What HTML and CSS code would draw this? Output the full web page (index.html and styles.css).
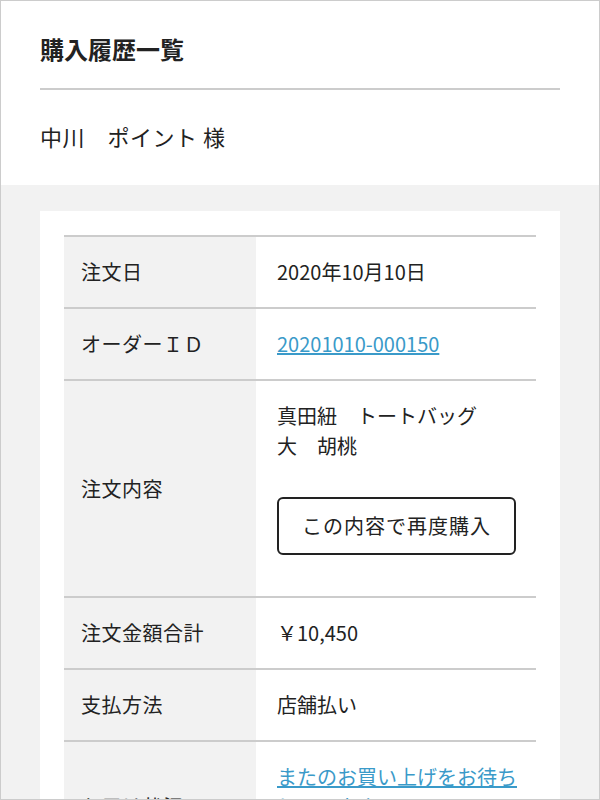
FILE: index.html
```html
<!DOCTYPE html>
<html lang="ja">
<head>
    <meta charset="UTF-8">
    <meta name="viewport" content="width=device-width, initial-scale=1.0">
    <title>購入履歴一覧</title>
    <link rel="stylesheet" href="styles.css">
</head>
<body>
    <div class="page">
        <div class="header">
            <h1 class="title">購入履歴一覧</h1>
            <p class="customer">中川　ポイント 様</p>
        </div>

        <div class="history">
            <div class="card">
                <table class="order">
                    <tr>
                        <th>注文日</th>
                        <td>2020年10月10日</td>
                    </tr>
                    <tr>
                        <th>オーダーＩＤ</th>
                        <td><a href="#">20201010-000150</a></td>
                    </tr>
                    <tr>
                        <th>注文内容</th>
                        <td>
                            真田紐　トートバッグ<br>大　胡桃
                            <button class="rebuy">この内容で再度購入</button>
                        </td>
                    </tr>
                    <tr>
                        <th>注文金額合計</th>
                        <td>￥10,450</td>
                    </tr>
                    <tr>
                        <th>支払方法</th>
                        <td>店舗払い</td>
                    </tr>
                    <tr>
                        <th>お届け状況</th>
                        <td>
                            <a href="#">またのお買い上げをお待ちしています</a><br>
                            受取済み
                        </td>
                    </tr>
                </table>
            </div>
        </div>
    </div>
</body>
</html>
```

FILE: styles.css
```css
body {
    margin: 0;
    font-family: "Noto Sans CJK JP", "Noto Sans", sans-serif;
    color: #222;
}
.page {
    box-sizing: border-box;
    height: 800px;
    overflow: hidden;
    border: 1px solid #ccc;
    background-color: #f2f2f2;
}
.header {
    background: white;
    padding: 30px 39px 32px;
}
.title {
    margin: 0;
    padding-bottom: 21px;
    border-bottom: 2px solid #ccc;
    font-size: 24px;
    line-height: 36px;
    font-weight: bold;
}
.customer {
    margin: 30px 0 0;
    font-size: 22px;
    line-height: 33px;
    letter-spacing: 0.5px;
}
.history {
    padding: 26px 39px;
}
.card {
    background: white;
    padding: 24px;
}
.order {
    width: 100%;
    border-collapse: collapse;
    border-top: 2px solid #ccc;
    font-size: 20px;
    line-height: 30px;
}
.order tr {
    border-bottom: 2px solid #ccc;
}
.order th {
    width: 192px;
    box-sizing: border-box;
    padding: 20px 16px 20px 17px;
    background-color: #f2f2f2;
    font-weight: normal;
    text-align: left;
    vertical-align: middle;
    letter-spacing: 0.5px;
}
.order td {
    padding: 20px 16px 20px 21px;
    vertical-align: top;
}
.order a {
    color: #3a9ac9;
}
.rebuy {
    display: block;
    margin: 36px 0 21px;
    padding: 12px 23px;
    border: 2px solid #222;
    border-radius: 6px;
    background: white;
    color: #222;
    font-family: inherit;
    font-size: 20px;
    line-height: 30px;
    letter-spacing: 1px;
    cursor: pointer;
}
```
